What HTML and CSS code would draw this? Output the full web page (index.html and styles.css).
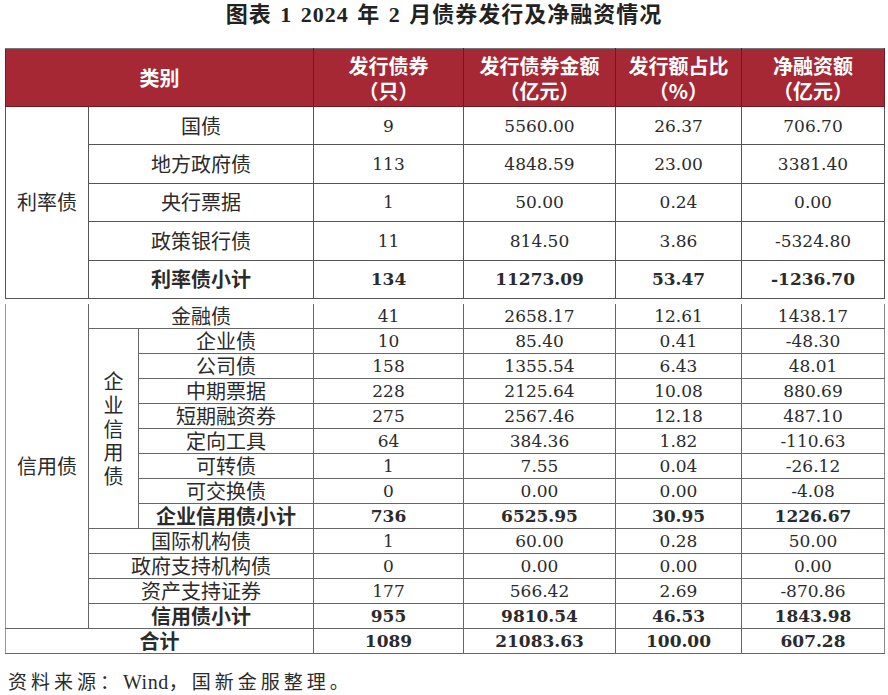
FILE: index.html
```html
<!DOCTYPE html>
<html lang="zh-CN">
<head>
<meta charset="utf-8">
<title>图表1</title>
<link rel="stylesheet" href="styles.css">
</head>
<body>
<div class="page">
  <h1 class="title">图表 1 2024 年 2 月债券发行及净融资情况</h1>

  <table class="t t1">
    <colgroup>
      <col class="c1"><col class="c23"><col class="c4"><col class="c5"><col class="c6"><col class="c7">
    </colgroup>
    <thead>
      <tr>
        <th colspan="2">类别</th>
        <th>发行债券<br>（只）</th>
        <th>发行债券金额<br>（亿元）</th>
        <th>发行额占比<br>（%）</th>
        <th>净融资额<br>（亿元）</th>
      </tr>
    </thead>
    <tbody>
      <tr><td rowspan="5" class="cat">利率债</td><td>国债</td><td class="num">9</td><td class="num">5560.00</td><td class="num">26.37</td><td class="num">706.70</td></tr>
      <tr><td>地方政府债</td><td class="num">113</td><td class="num">4848.59</td><td class="num">23.00</td><td class="num">3381.40</td></tr>
      <tr><td>央行票据</td><td class="num">1</td><td class="num">50.00</td><td class="num">0.24</td><td class="num">0.00</td></tr>
      <tr><td>政策银行债</td><td class="num">11</td><td class="num">814.50</td><td class="num">3.86</td><td class="num">-5324.80</td></tr>
      <tr class="b"><td>利率债小计</td><td class="num">134</td><td class="num">11273.09</td><td class="num">53.47</td><td class="num">-1236.70</td></tr>
    </tbody>
  </table>

  <table class="t t2">
    <colgroup>
      <col class="c1"><col class="c2"><col class="c3"><col class="c4"><col class="c5"><col class="c6"><col class="c7">
    </colgroup>
    <tbody>
      <tr><td rowspan="13" class="cat">信用债</td><td colspan="2">金融债</td><td class="num">41</td><td class="num">2658.17</td><td class="num">12.61</td><td class="num">1438.17</td></tr>
      <tr><td rowspan="8" class="vert"><span class="vtext">企业信用债</span></td><td>企业债</td><td class="num">10</td><td class="num">85.40</td><td class="num">0.41</td><td class="num">-48.30</td></tr>
      <tr><td>公司债</td><td class="num">158</td><td class="num">1355.54</td><td class="num">6.43</td><td class="num">48.01</td></tr>
      <tr><td>中期票据</td><td class="num">228</td><td class="num">2125.64</td><td class="num">10.08</td><td class="num">880.69</td></tr>
      <tr><td>短期融资券</td><td class="num">275</td><td class="num">2567.46</td><td class="num">12.18</td><td class="num">487.10</td></tr>
      <tr><td>定向工具</td><td class="num">64</td><td class="num">384.36</td><td class="num">1.82</td><td class="num">-110.63</td></tr>
      <tr><td>可转债</td><td class="num">1</td><td class="num">7.55</td><td class="num">0.04</td><td class="num">-26.12</td></tr>
      <tr><td>可交换债</td><td class="num">0</td><td class="num">0.00</td><td class="num">0.00</td><td class="num">-4.08</td></tr>
      <tr class="b"><td>企业信用债小计</td><td class="num">736</td><td class="num">6525.95</td><td class="num">30.95</td><td class="num">1226.67</td></tr>
      <tr><td colspan="2">国际机构债</td><td class="num">1</td><td class="num">60.00</td><td class="num">0.28</td><td class="num">50.00</td></tr>
      <tr><td colspan="2">政府支持机构债</td><td class="num">0</td><td class="num">0.00</td><td class="num">0.00</td><td class="num">0.00</td></tr>
      <tr><td colspan="2">资产支持证券</td><td class="num">177</td><td class="num">566.42</td><td class="num">2.69</td><td class="num">-870.86</td></tr>
      <tr class="b"><td colspan="2">信用债小计</td><td class="num">955</td><td class="num">9810.54</td><td class="num">46.53</td><td class="num">1843.98</td></tr>
      <tr class="b"><td colspan="3">合计</td><td class="num">1089</td><td class="num">21083.63</td><td class="num">100.00</td><td class="num">607.28</td></tr>
    </tbody>
  </table>

  <p class="source">资料来源：<span class="latin">Wind</span>，国新金服整理。</p>
</div>
</body>
</html>
```

FILE: styles.css
```css
html, body {
  margin: 0;
  padding: 0;
  background: #ffffff;
}

.page {
  width: 888px;
  color: #2b2b2b;
  font-family: "Noto Sans CJK SC", sans-serif;
}

.title {
  margin: 0;
  height: 30px;
  line-height: 30px;
  text-align: center;
  font-family: "Liberation Serif", "Noto Sans CJK SC", serif;
  font-size: 22px;
  font-weight: 700;
  letter-spacing: 1px;
  word-spacing: 2px;
  color: #222;
}

.t {
  border-collapse: collapse;
  table-layout: fixed;
  width: 879px;
  margin-left: 5px;
}

.t td, .t th {
  padding: 0;
  text-align: center;
  vertical-align: middle;
  font-size: 20px;
  font-weight: 400;
  white-space: nowrap;
}

.c1 { width: 83px; }
.c2 { width: 50px; }
.c3 { width: 175px; }
.c23 { width: 225px; }
.c4 { width: 150px; }
.c5 { width: 152px; }
.c6 { width: 126px; }
.c7 { width: 143px; }

/* header + section 1 */
.t1 {
  margin-top: 18px;
}

.t1 th {
  height: 57px;
  background: #a52834;
  color: #ffffff;
  font-weight: 700;
  line-height: 25px;
  border: 1px solid #6e1a22;
  border-top-color: #777;
}

.t1 td {
  height: 37.4px;
  line-height: 22px;
  border: 1px solid #555;
}

/* section 2 */
.t2 {
  margin-top: 5px;
}

.t2 td {
  height: 24px;
  line-height: 20px;
  border: 1px solid #666;
}

.t2 tr:first-child td {
  border-top: none;
}

.t2 td:first-child {
  border-left-color: #999;
}

.t2 td:last-child {
  border-right-color: #888;
}

.num {
  font-family: "DejaVu Serif", serif;
  font-size: 17px !important;
}

.b td {
  font-weight: 700;
}

.cat {
  font-weight: 400;
}

.vert {
  white-space: normal !important;
}

.vtext {
  display: inline-block;
  width: 1em;
  line-height: 23.75px;
  white-space: normal;
  word-break: break-all;
}

.source {
  margin: 14px 0 0 8px;
  height: 28px;
  line-height: 28px;
  font-family: "Liberation Serif", "Noto Sans CJK SC", serif;
  font-size: 19px;
  letter-spacing: 4px;
  color: #2b2b2b;
}

.latin {
  font-size: 20px;
  letter-spacing: 0.5px;
}
```
